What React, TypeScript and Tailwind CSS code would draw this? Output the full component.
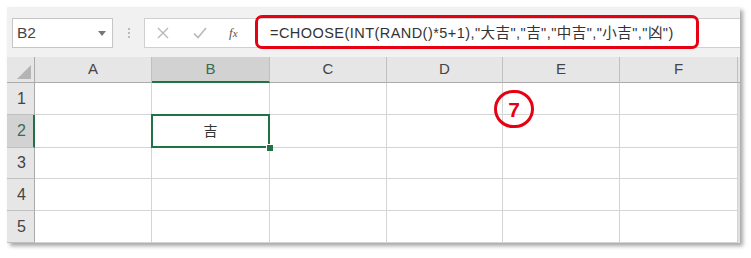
import React from 'react';

const cols = ['A', 'B', 'C', 'D', 'E', 'F'];
const rows = [1, 2, 3, 4, 5];
const font = { fontFamily: '"Liberation Sans", "Noto Sans CJK JP", sans-serif' };

export default function App() {
  return (
    <div className="relative w-[751px] h-[258px] bg-white pt-[7px] pl-[7px]" style={font}>
      <div className="w-[733px] h-[236px] bg-[#f1f1f1] shadow-[3px_3px_4px_rgba(0,0,0,0.35)] flex flex-col">
        {/* toolbar */}
        <div className="h-[50px] flex items-start pt-[11px] pl-[5px]">
          <div className="w-[101px] h-[30px] bg-white border border-[#c6c6c6] flex items-center justify-between pl-[4px] pr-[6px]">
            <span className="text-[15.5px] text-[#444] leading-none">B2</span>
            <svg width="8" height="5" viewBox="0 0 8 5">
              <path d="M0 0 L8 0 L4 5 Z" fill="#777" />
            </svg>
          </div>
          <div className="w-[31px] h-[30px] flex flex-col items-center justify-center gap-[2px]">
            <span className="w-[2px] h-[2px] bg-[#bbb]" />
            <span className="w-[2px] h-[2px] bg-[#bbb]" />
            <span className="w-[2px] h-[2px] bg-[#bbb]" />
          </div>
          <div className="flex-1 h-[30px] bg-white border border-[#d0d0d0] border-r-0 flex items-center">
            <div className="w-[110px] flex items-center">
              <svg className="ml-[12px]" width="12" height="12" viewBox="0 0 12 12">
                <path d="M1 1 L11 11 M11 1 L1 11" stroke="#b8b8b8" strokeWidth="1.4" />
              </svg>
              <svg className="ml-[24px]" width="14" height="12" viewBox="0 0 14 12">
                <path d="M1 6.5 L5 10.5 L13 1" stroke="#b8b8b8" strokeWidth="1.6" fill="none" />
              </svg>
              <span className="ml-[22px] text-[13px] italic text-[#555]" style={{ fontFamily: '"Liberation Serif", serif' }}>
                f<span className="text-[11px]">x</span>
              </span>
            </div>
            <span className="ml-[15px] mt-[2px] text-[14.5px] tracking-[0.45px] text-[#333] whitespace-nowrap">
              =CHOOSE(INT(RAND()*5+1),"大吉","吉","中吉","小吉","凶")
            </span>
          </div>
        </div>
        {/* sheet */}
        <div className="grid grid-cols-[28px_117px_118px_117px_116px_117px_118px_1fr] grid-rows-[26px_32px_33px_31px_32px_32px]">
          <div className="bg-[#e6e6e6] border-r border-b border-[#ababab] relative">
            <svg className="absolute right-[3px] bottom-[3px]" width="14" height="14" viewBox="0 0 14 14">
              <path d="M14 0 L14 14 L0 14 Z" fill="#b4b4b4" />
            </svg>
          </div>
          {cols.map((c) => (
            <div
              key={c}
              className={
                c === 'B'
                  ? 'bg-[#d2d2d2] border-r border-[#c0c0c0] border-b-2 border-b-[#217346] flex items-center justify-center text-[15px] text-[#3b6c52]'
                  : 'bg-[#e6e6e6] border-r border-[#c0c0c0] border-b border-b-[#ababab] flex items-center justify-center text-[15px] text-[#444]'
              }
            >
              {c}
            </div>
          ))}
          <div className="bg-[#e6e6e6] border-b border-[#ababab]" />
          {rows.map((r) => (
            <React.Fragment key={r}>
              <div
                className={
                  r === 2
                    ? 'bg-[#d2d2d2] border-r-2 border-r-[#217346] border-b border-[#c0c0c0] flex items-center pl-[10px] text-[16px] text-[#3b6c52]'
                    : 'bg-[#e6e6e6] border-r border-r-[#ababab] border-b border-[#c0c0c0] flex items-center pl-[10px] text-[16px] text-[#444]'
                }
              >
                {r}
              </div>
              {cols.map((c) => (
                <div key={c} className="bg-white border-r border-b border-[#d4d4d4] relative">
                  {r === 2 && c === 'B' && (
                    <div className="absolute z-10 -left-[1px] -top-[1px] w-[119px] h-[34px] border-2 border-[#217346] flex items-center justify-center text-[14px] text-[#333]">
                      吉
                      <span className="absolute -right-[5px] -bottom-[5px] w-[7px] h-[7px] bg-[#217346] border-l border-t border-white" />
                    </div>
                  )}
                </div>
              ))}
              <div className="bg-[#e0e0e0]" />
            </React.Fragment>
          ))}
        </div>
      </div>
      {/* annotations */}
      <div className="absolute left-[255px] top-[15px] w-[444px] h-[34px] border-[3px] border-[#e60012] rounded-[7px]" />
      <div className="absolute left-[494px] top-[90px] w-[40px] h-[38px] border-[3px] border-[#e60012] rounded-full flex items-center justify-center text-[21px] font-bold text-[#e60012] leading-none">
        7
      </div>
    </div>
  );
}
